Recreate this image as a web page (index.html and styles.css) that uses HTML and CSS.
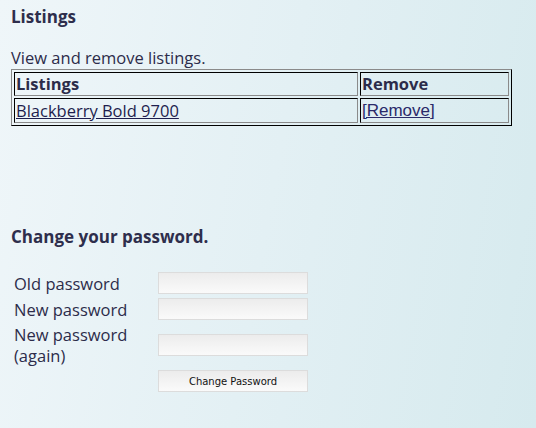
FILE: index.html
```html
<!DOCTYPE html>
<html>
<head>
<meta charset="utf-8">
<link rel="stylesheet" href="styles.css">
</head>
<body>
<div class="page">
  <h2 class="title">Listings</h2>
  <p class="intro">View and remove listings.</p>
  <table class="listings" border="1" cellspacing="2">
    <tr><th class="col-name">Listings</th><th>Remove</th></tr>
    <tr><td><a href="#">Blackberry Bold 9700</a></td><td><a href="#" class="remove">[Remove]</a></td></tr>
  </table>

  <h2 class="title pw-title">Change your password.</h2>
  <table class="pwform" cellspacing="2">
    <tr><td class="lbl">Old password</td><td><input class="field" type="password"></td></tr>
    <tr><td class="lbl">New password</td><td><input class="field" type="password"></td></tr>
    <tr><td class="lbl">New password (again)</td><td><input class="field" type="password"></td></tr>
    <tr><td></td><td><button class="btn" type="button">Change Password</button></td></tr>
  </table>
</div>
</body>
</html>
```

FILE: styles.css
```css
html, body {
  margin: 0;
  padding: 0;
  height: 100%;
}
body {
  background: linear-gradient(100deg, #eff6f9 0%, #e3f0f4 50%, #d6eaee 100%);
  font-family: "Open Sans", "Noto Sans", sans-serif;
  color: #2c2c4a;
  font-size: 16.5px;
}
.page {
  padding: 6px 11px 0 11px;
}
.title {
  font-size: 17px;
  font-weight: 700;
  margin: 0;
  line-height: 22px;
  color: #2e2e4c;
}
.intro {
  margin: 19px 0 0 0;
  line-height: 22px;
}
.listings {
  width: 501px;
  border-collapse: separate;
  border-spacing: 2px;
  border: 1px outset #808080;
  border-color: #8a8a8a #222 #222 #8a8a8a;
}
.listings th, .listings td {
  border: 1px inset #808080;
  border-color: #222 #8a8a8a #8a8a8a #222;
  padding: 0 1px;
  text-align: left;
  height: 22px;
  line-height: 22px;
}
.listings th {
  font-weight: 700;
}
.col-name {
  width: 340px;
}
.listings a {
  color: #1e1e4e;
}
.listings a.remove {
  color: #2a2a6a;
  font-family: "Liberation Sans", sans-serif;
  font-size: 17px;
}
.pw-title {
  margin-top: 100px;
}
.pwform {
  margin-top: 21px;
  margin-left: 0;
  border-collapse: separate;
  border-spacing: 2px;
}
.pwform td {
  padding: 1px;
  vertical-align: middle;
}
.lbl {
  width: 140px;
  line-height: 21px;
}
.field, .btn {
  width: 150px;
  height: 22px;
  box-sizing: border-box;
  border: 1px solid #dcdcdc;
  background: linear-gradient(#ececec, #fafafa);
  margin: 0;
  display: block;
}
.btn {
  font-family: "DejaVu Sans", sans-serif;
  font-size: 10px;
  color: #111;
  padding: 0;
}
```
